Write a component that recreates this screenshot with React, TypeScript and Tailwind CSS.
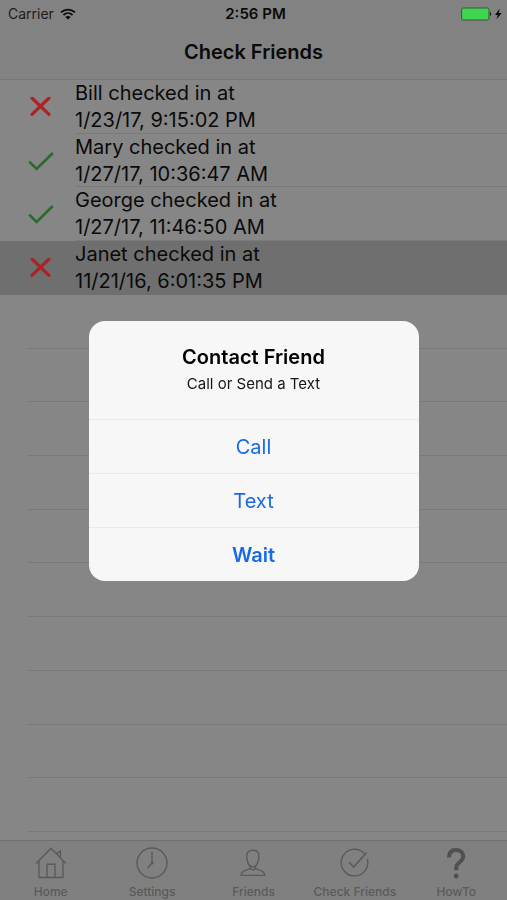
import type { ReactNode } from 'react'

interface CheckIn {
  name: string
  time: string
  ok: boolean
}

const checkIns: CheckIn[] = [
  { name: 'Bill', time: '1/23/17, 9:15:02 PM', ok: false },
  { name: 'Mary', time: '1/27/17, 10:36:47 AM', ok: true },
  { name: 'George', time: '1/27/17, 11:46:50 AM', ok: true },
  { name: 'Janet', time: '11/21/16, 6:01:35 PM', ok: false },
]

const selected = 'Janet'
const emptyRows = Array.from({ length: 10 }, (_, i) => i)

function WifiIcon() {
  return (
    <svg viewBox="0 0 16 12" className="w-4 h-3" fill="none" stroke="#0c0c0c" strokeWidth="1.8">
      <path d="M1 4.4C5 .6 11 .6 15 4.4" />
      <path d="M3.5 7C6.2 4.5 9.8 4.5 12.5 7" />
      <path d="M8 11.6 5.3 8.9C6.9 7.6 9.1 7.6 10.7 8.9Z" fill="#0c0c0c" stroke="none" />
    </svg>
  )
}

function BatteryIcon() {
  return (
    <svg viewBox="0 0 42 14" className="w-[42px] h-[14px]">
      <rect x="0.6" y="1" width="27.4" height="12" rx="1.8" fill="#3fd64f" stroke="#38553b" strokeWidth="1" />
      <path d="M29 5c1.6.3 1.6 3.7 0 4Z" fill="#222" />
      <path d="M38.8 1.6 34 8h2.8l-1.4 4.6L40.6 6h-3Z" fill="#0a0a0a" />
    </svg>
  )
}

function StatusMark({ ok }: { ok: boolean }) {
  return ok ? (
    <svg viewBox="0 0 26 20" className="w-[26px] h-5" fill="none" stroke="#2a6b2c" strokeWidth="2.6">
      <path d="M1.2 10.6 8.6 18 24.8 2" />
    </svg>
  ) : (
    <svg viewBox="0 0 26 20" className="w-[26px] h-5" fill="none" stroke="#ac2226" strokeWidth="3.2">
      <path d="M4 1 21 17.4M21 1 4 17.4" strokeLinecap="round" />
    </svg>
  )
}

function TabIcon({ children }: { children: ReactNode }) {
  return (
    <svg viewBox="0 0 34 34" className="w-[34px] h-[34px]" fill="none" stroke="#5a5a5a" strokeWidth="1.4">
      {children}
    </svg>
  )
}

const tabs = [
  {
    label: 'Home',
    icon: (
      <TabIcon>
        <path d="M2 17.5 17 2.2 32 17.5" />
        <path d="M5 15v16.5h24V15" />
        <path d="M13 31.5V18.2h8v13.3" />
        <path d="M22.5 7.6 26.4 5v6.6" />
      </TabIcon>
    ),
  },
  {
    label: 'Settings',
    icon: (
      <TabIcon>
        <circle cx="17" cy="17" r="15" />
        <path d="M17 5.5V17L12.5 22.3" />
        <circle cx="17.2" cy="17" r="1.6" fill="#5a5a5a" stroke="none" />
      </TabIcon>
    ),
  },
  {
    label: 'Friends',
    icon: (
      <TabIcon>
        <path d="M16.8 4.2c4.2 0 6.1 2 6.1 5.8 0 5-2 10.9-6.1 10.9S10.700 15 10.700 10c0-3.800 1.900-5.800 6.100-5.800Z" />
        <path d="M14.200 19.800v2.100c0 .8-1.200 1.200-3.600 1.900-3.600 1-5.200 2.400-5.500 5.600h23.600c-.3-3.200-1.900-4.600-5.500-5.600-2.400-.7-3.600-1.100-3.600-1.900v-2.100" />
        <path d="M13.700 22.300c1.900 1.700 4.300 1.700 6.200 0" />
      </TabIcon>
    ),
  },
  {
    label: 'Check Friends',
    icon: (
      <TabIcon>
        <path d="M26.300 7.600A13.300 13.300 0 1 0 29.300 13" />
        <path d="M11 16 15.600 21 28.700 6.500" strokeWidth="1.7" />
      </TabIcon>
    ),
  },
  {
    label: 'HowTo',
    icon: (
      <TabIcon>
        <path
          d="M10 11.500C10 6.500 12.600 4 17 4s7.200 2.600 7.200 6.600c0 5.600-7 5.600-7 11v2.600"
          stroke="#505050"
          strokeWidth="4"
        />
        <circle cx="17.200" cy="30" r="2.400" fill="#505050" stroke="none" />
      </TabIcon>
    ),
  },
]

function ContactDialog() {
  return (
    <div className="fixed inset-0 flex items-center justify-center pt-0.5">
      <div
        role="dialog"
        aria-labelledby="contact-title"
        className="w-[330px] overflow-hidden rounded-2xl bg-[#f7f7f7] text-center"
      >
        <div className="py-6">
          <h2 id="contact-title" className="text-xl leading-6 font-semibold text-black">
            Contact Friend
          </h2>
          <p className="mt-1 text-[15px] leading-[22px] text-[#161616]">Call or Send a Text</p>
        </div>
        <div className="flex flex-col text-xl text-[#1769e6]">
          <button className="h-[54px] border-t border-[#ebebeb]">Call</button>
          <button className="h-[54px] border-t border-[#ebebeb]">Text</button>
          <button className="h-[54px] border-t border-[#ebebeb] font-semibold">Wait</button>
        </div>
      </div>
    </div>
  )
}

export default function App() {
  return (
    <div className="flex min-h-screen flex-col bg-[#868686] font-['Inter',sans-serif] text-[#0a0a0a]">
      <header className="h-20 border-b border-[#777] bg-[#828282]">
        <div className="grid h-7 grid-cols-3 items-center pr-1 pl-2 text-sm">
          <div className="flex items-center gap-1.5 text-[#1c1c1c]">
            <span>Carrier</span>
            <WifiIcon />
          </div>
          <span className="text-center text-[15px] font-semibold">2:56 PM</span>
          <div className="flex justify-end">
            <BatteryIcon />
          </div>
        </div>
        <h1 className="pt-3 text-center text-xl leading-6 font-semibold">Check Friends</h1>
      </header>

      <ul className="grid flex-1 auto-rows-[minmax(0,1fr)] pb-2">
        {checkIns.map(({ name, time, ok }) => (
          <li key={name} className={name === selected ? 'flex bg-[#6f6f6f]' : 'flex'}>
            <div className="flex w-[75px] items-center pl-7">
              <StatusMark ok={ok} />
            </div>
            <div className={name === selected ? 'flex-1' : 'flex-1 border-b border-[#7a7a7a]'}>
              <p className="h-[52px] text-xl leading-[27px]">
                {name} checked in at
                <br />
                {time}
              </p>
            </div>
          </li>
        ))}
        {emptyRows.map((row) => (
          <li key={row} className="ml-[27px] border-b border-[#7a7a7a]" />
        ))}
      </ul>

      <nav className="grid h-[60px] grid-cols-5 border-t border-[#707070] bg-[#808080]">
        {tabs.map(({ label, icon }) => (
          <button key={label} className="flex flex-col items-center pt-[5px] text-xs text-[#5a5a5a]">
            {icon}
            <span className="mt-1 font-medium whitespace-nowrap">{label}</span>
          </button>
        ))}
      </nav>

      <ContactDialog />
    </div>
  )
}
